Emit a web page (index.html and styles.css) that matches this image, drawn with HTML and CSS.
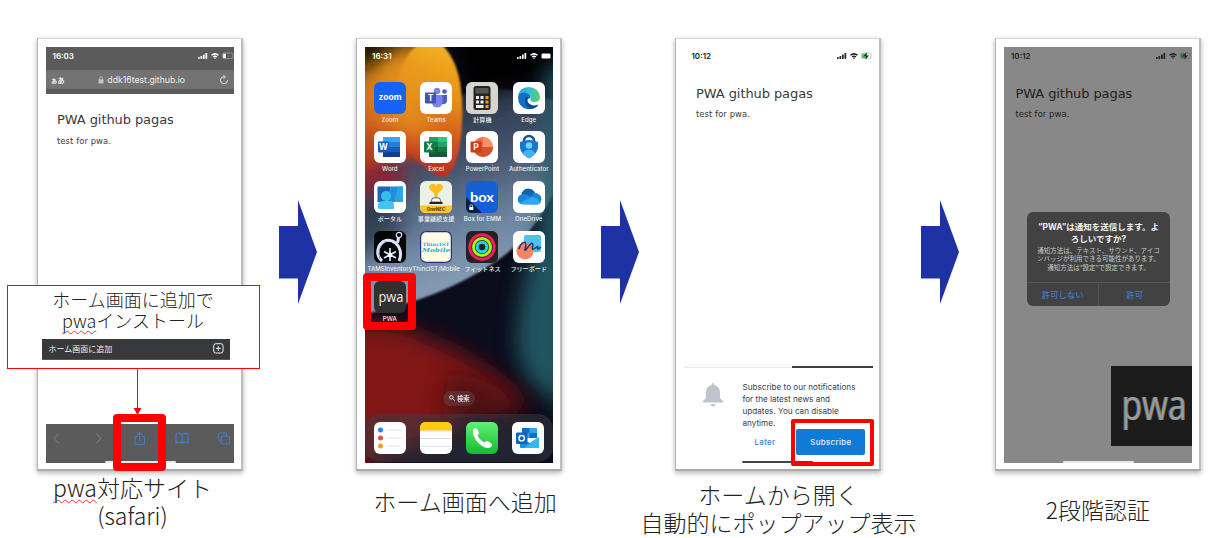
FILE: index.html
```html
<!DOCTYPE html>
<html lang="ja">
<head>
<meta charset="utf-8">
<title>PWA</title>
<link rel="stylesheet" href="styles.css">
</head>
<body>
<svg width="0" height="0" class="defs">
  <defs>
    <g id="signal"><rect x="0" y="5" width="1.7" height="2" rx=".4"/><rect x="2.5" y="3.9" width="1.7" height="3.1" rx=".4"/><rect x="5" y="2.4" width="1.7" height="4.6" rx=".4"/><rect x="7.5" y="1" width="1.7" height="6" rx=".4"/></g>
    <g id="wifi"><path d="M13 2.7Q17 -.5 21 2.7L20 3.8Q17 1.5 14 3.8Z"/><path d="M14.6 4.4Q17 2.6 19.4 4.4L18.4 5.4Q17 4.4 15.6 5.4Z"/><path d="M16 5.9Q17 5.2 18 5.9L17 7Z"/></g>
  </defs>
</svg>
<main class="steps">

  <section class="step">
    <div class="phone">
      <div class="screen safari">
        <header class="browser">
          <div class="status"><span>16:03</span>
            <svg width="36" height="8" fill="#fff"><use href="#signal"/><use href="#wifi"/><rect x="24.5" y="1" width="10.5" height="5.6" rx="1.6" fill="none" stroke="#aaa" stroke-width=".7"/><rect x="25.2" y="1.7" width="2.6" height="4.3" rx=".6"/></svg>
          </div>
          <div class="url"><span class="aa">ぁあ</span>
            <span class="host"><svg width="6" height="8" fill="#c4c4c4"><rect x=".5" y="3.3" width="5" height="4.3" rx=".7"/><path d="M1.6 3.5V2.2a1.4 1.4 0 0 1 2.8 0V3.5" fill="none" stroke="#c4c4c4" stroke-width=".8"/></svg>ddk16test.github.io</span>
            <svg width="10" height="10" fill="none" stroke="#e5e5e5" stroke-width="1"><path d="M5 1.7A3.5 3.5 0 1 0 8.5 5.2M4.4 .2L6.4 1.8L4.6 3.5"/></svg>
          </div>
        </header>
        <div class="page"><h1>PWA github pagas</h1><p>test for pwa.</p></div>
        <footer class="toolbar">
          <svg width="188" height="38" fill="none" stroke="#447dc9" stroke-width="1.1">
            <path d="M12.5 10L8 14.5L12.5 19M50.5 10L55 14.5L50.5 19" stroke="#747474"/>
            <path d="M91.700 12.5H89.900Q88.900 12.5 88.900 13.5V19.2Q88.900 20.2 89.900 20.2H97.500Q98.500 20.2 98.500 19.2V13.5Q98.500 12.5 97.500 12.5H95.700M93.700 17V8.6M91.300 10.8L93.700 8.4L96.100 10.8"/>
            <path d="M136 11Q132.5 7.7 130 10.2V19Q133.5 17 136 19.4Q138.500 17 142 19V10.200Q139.500 7.700 136 11V19.400"/>
            <rect x="172.2" y="9" width="8.3" height="8" rx="1.6"/><rect x="175.2" y="12" width="8.300" height="8" rx="1.600" fill="#5b5b5b"/>
          </svg>
          <i class="home-bar"></i>
        </footer>
      </div>
    </div>
    <p class="caption"><span class="typo">pwa</span>対応サイト<br><span class="latin">(safari)</span></p>
    <div class="mark mark-share"></div>
    <div class="callout">
      <p>ホーム画面に追加で<br><span class="typo">pwa</span>インストール</p>
      <div class="menu-row"><span>ホーム画面に追加</span><svg width="11" height="11" fill="none" stroke="#eee"><rect x=".7" y=".7" width="9.300" height="9.300" rx="2"/><path d="M5.350 3V7.700M3 5.350H7.700"/></svg></div>
      <svg class="pointer" width="10" height="47"><path d="M5.500 0V40" stroke="red"/><path d="M1.500 39H9.500L5.500 46Z" fill="red"/></svg>
    </div>
  </section>

  <svg class="arrow first" width="38" height="104"><path d="M0 26H19V0L38 52L19 104V78.500H0Z" fill="#1e32a4"/></svg>

  <section class="step">
    <div class="phone">
      <div class="screen springboard">
        <svg class="wallpaper" viewBox="0 0 565 1246" preserveAspectRatio="none">
          <defs>
            <linearGradient id="sun" x1="0.600" y1="0" x2="0.500" y2="1"><stop offset="0" stop-color="#f3b324"/><stop offset=".42" stop-color="#e68e18"/><stop offset=".72" stop-color="#cf5420"/><stop offset="1" stop-color="#bd2625"/></linearGradient>
            <linearGradient id="disk" gradientUnits="userSpaceOnUse" x1="260" y1="170" x2="400" y2="660"><stop offset="0" stop-color="#2b364a"/><stop offset=".35" stop-color="#45546c"/><stop offset=".75" stop-color="#6e86a2"/><stop offset="1" stop-color="#8398b1"/></linearGradient>
            <linearGradient id="rust" x1="0" y1="0" x2="0" y2="1"><stop offset="0" stop-color="#4a2e0c"/><stop offset=".2" stop-color="#d08415"/><stop offset=".55" stop-color="#d36419"/><stop offset="1" stop-color="#a8262a"/></linearGradient>
            <filter id="b8" x="-20%" y="-20%" width="140%" height="140%"><feGaussianBlur stdDeviation="12"/></filter>
            <filter id="b30" x="-50%" y="-50%" width="200%" height="200%"><feGaussianBlur stdDeviation="32"/></filter>
            <filter id="b2"><feGaussianBlur stdDeviation="2.500"/></filter>
          </defs>
          <rect width="565" height="1246" fill="#0b0c1c"/>
          <path d="M-20 805Q220 760 390 645Q500 570 565 440V160Q440 115 330 125L-20 300Z" fill="url(#disk)" filter="url(#b2)"/>
          <path d="M-60 420L60 420L130 540L-60 660Z" fill="#2c3446" opacity=".8" filter="url(#b30)"/>
          <path d="M-40 340H110Q160 400 60 440L-40 450Z" fill="#8f2430" filter="url(#b30)"/>
          <path d="M260 -40H600V90Q440 110 300 150Z" fill="#020304" filter="url(#b30)"/>
          <path d="M-40 -20L160 -40L210 360Q110 300 -40 400Z" fill="url(#rust)" filter="url(#b8)"/>
          <path d="M-40 -40H120Q50 50 -40 90Z" fill="#090806" filter="url(#b30)"/>
          <path d="M110 60Q150 -30 215 -20Q270 20 286 110Q300 210 282 310Q262 393 228 390Q180 370 140 320Q60 230 110 60Z" fill="url(#sun)" filter="url(#b2)"/>
          <path d="M30 80Q100 20 150 0L200 280Q120 270 30 210Z" fill="#e6941a" opacity=".75" filter="url(#b30)"/>
          <path d="M610 20L535 80Q560 300 515 580Q445 770 460 930Q500 1040 610 1080Z" fill="#245d68" opacity=".92" filter="url(#b30)"/>
          <path d="M-70 850Q60 800 200 880Q340 930 490 1070Q380 1110 330 1090Q240 1170 170 1180L-70 1290Z" fill="#811514" filter="url(#b30)"/>
          <path d="M250 980Q360 980 480 1080L230 1120Z" fill="#3c090b" opacity=".7" filter="url(#b30)"/>
        </svg>
        <div class="status"><span>16:31</span>
          <svg width="36" height="8" fill="#fff"><use href="#signal"/><use href="#wifi"/><rect x="24.500" y="1.500" width="9" height="5" rx="1.200"/></svg>
        </div>
        <div class="apps">
          <div class="app"><svg viewBox="0 0 32 32"><rect width="32" height="32" rx="6" fill="#1463f6"/><text x="16" y="18.200" class="t-zoom" textLength="23" lengthAdjust="spacingAndGlyphs">zoom</text></svg><b>Zoom</b></div>
          <div class="app"><svg viewBox="0 0 32 32"><rect width="32" height="32" rx="6" fill="#fff"/><circle cx="24.500" cy="9.500" r="2.300" fill="#5059c9"/><path d="M20 13H27V19Q26 23 21 22Z" fill="#5059c9"/><circle cx="17" cy="9" r="3.200" fill="#7b83eb"/><path d="M12 13H22.500V20Q22 25.500 17 25.500Q13 25.500 12 21Z" fill="#7b83eb"/><rect x="5" y="10.500" width="11" height="11" rx="1" fill="#464eb8"/><text x="10.500" y="19" class="t-ms">T</text></svg><b>Teams</b></div>
          <div class="app"><svg viewBox="0 0 32 32"><rect width="32" height="32" rx="6" fill="#d5d4cf"/><rect x="7.500" y="4" width="17" height="24" rx="2.500" fill="#242424"/><rect x="9.500" y="6" width="13" height="5.500" rx="1" fill="#555"/><path d="M10 14h3v3h-3zM14.500 14h3v3h-3zM10 18.500h3v3h-3zM14.500 18.500h3v3h-3zM10 23h7.500v3h-7.500z" fill="#eee"/><path d="M19.500 14h3v3h-3zM19.500 18.500h3v3h-3zM19.500 23h3v3h-3z" fill="#f79a1b"/></svg><b>計算機</b></div>
          <div class="app"><svg viewBox="0 0 32 32"><defs><linearGradient id="eg"><stop offset="0" stop-color="#249be0"/><stop offset=".55" stop-color="#32c1d0"/><stop offset="1" stop-color="#5bd457"/></linearGradient></defs><rect width="32" height="32" rx="6" fill="#fff"/><path d="M5 15Q6 5 16 5Q26 6 27 15Q27 20 21.500 20Q16.500 20 17.500 17Q19 13 15 12Q9 11 5 15Z" fill="url(#eg)"/><path d="M5 15Q7 10 13 11Q18 12 17.500 16Q12 17 15 22Q18 26 25 23Q21 28 14 27Q5 25 5 15Z" fill="#156fc5"/><path d="M12.500 15Q10 22 16 26.500Q22 28 25.500 22.500Q20 25 16 21.500Q13.500 19 15 15.500Z" fill="#0c4c94"/></svg><b>Edge</b></div>

          <div class="app"><svg viewBox="0 0 32 32"><rect width="32" height="32" rx="6" fill="#fff"/><path d="M9 6H26V11H9Z" fill="#41a5ee"/><path d="M9 11H26V16H9Z" fill="#2b7cd3"/><path d="M9 16H26V21H9Z" fill="#185abd"/><path d="M9 21H26V26H9Z" fill="#103f91"/><rect x="4" y="10.500" width="11" height="11" rx="1" fill="#185abd"/><text x="9.500" y="19" class="t-ms">W</text></svg><b>Word</b></div>
          <div class="app"><svg viewBox="0 0 32 32"><rect width="32" height="32" rx="6" fill="#fff"/><path d="M9 6H18V11H9Z" fill="#21a366"/><path d="M18 6H27V11H18Z" fill="#33c481"/><path d="M9 11H18V16H9Z" fill="#107c41"/><path d="M18 11H27V16H18Z" fill="#21a366"/><path d="M9 16H18V26H9Z" fill="#185c37"/><path d="M18 16H27V21H18Z" fill="#107c41"/><path d="M18 21H27V26H18Z" fill="#185c37"/><rect x="4" y="10.500" width="11" height="11" rx="1" fill="#107c41"/><text x="9.500" y="19" class="t-ms">X</text></svg><b>Excel</b></div>
          <div class="app"><svg viewBox="0 0 32 32"><rect width="32" height="32" rx="6" fill="#fff"/><circle cx="17" cy="16" r="10" fill="#ed6c47"/><path d="M17 6A10 10 0 0 1 27 16H17Z" fill="#ff8f6b"/><path d="M7 16A10 10 0 0 0 27 16Z" fill="#d35230"/><rect x="4.500" y="10.500" width="11" height="11" rx="1" fill="#c43e1c"/><text x="10" y="19" class="t-ms">P</text></svg><b>PowerPoint</b></div>
          <div class="app"><svg viewBox="0 0 32 32"><rect width="32" height="32" rx="6" fill="#fff"/><path d="M11 11V9.500A5 4.500 0 0 1 21 9.500V11" fill="none" stroke="#174f9e" stroke-width="2.500"/><path d="M7 11Q16 7 25 11V17Q24 23 16 27.500Q8 23 7 17Z" fill="#1a75cf"/><circle cx="16" cy="14.500" r="3.300" fill="#6ed3f5"/><path d="M10 22.500Q11 18.700 16 18.700Q21 18.700 22 22.500Q19 26 16 27.500Q13 26 10 22.500Z" fill="#43b5ee"/></svg><b>Authenticator</b></div>

          <div class="app"><svg viewBox="0 0 32 32"><rect width="32" height="32" rx="6" fill="#fff"/><path d="M3.500 5.500H17L13 21H3.500Z" fill="#1c67b7"/><path d="M17 5.500H29V21H13Z" fill="#1e8fdb"/><path d="M24 5.500H29V21H20Z" fill="#2ca6e6"/><circle cx="12" cy="15" r="5" fill="#3bbdea"/><path d="M4 27V23Q5 20 9 20H16Q20 20 20 24V28H6Q4 28 4 27Z" fill="#42c5ee"/></svg><b>ポータル</b></div>
          <div class="app"><svg viewBox="0 0 32 32"><rect width="32" height="32" rx="6" fill="#ebf1e5"/><path d="M0 24.500H32V26Q32 32 26 32H6Q0 32 0 26Z" fill="#ffc42e"/><path d="M16 14L9.500 8A3.400 3.400 0 0 1 16 5A3.400 3.400 0 0 1 22.500 8Z" fill="#f9bd20"/><path d="M14 13H18L17 17H15Z" fill="#f9bd20"/><path d="M12.500 17H19.500L21 21H11Z" fill="#fff" stroke="#333" stroke-width=".7"/><rect x="9.500" y="21" width="13" height="2" fill="#222"/><text x="16" y="29.800" class="t-nec">OneNEC</text></svg><b>事業継続支援</b></div>
          <div class="app"><svg viewBox="0 0 32 32"><rect width="32" height="32" rx="6" fill="#155fd4"/><path d="M0 16L16 32H6Q0 32 0 26Z" fill="#071f4d"/><rect x="3.300" y="26" width="4" height="3" fill="#fff"/><path d="M4 26V25A1.300 1.300 0 0 1 6.600 25V26" fill="none" stroke="#fff" stroke-width=".7"/><text x="16" y="20.500" class="t-box" textLength="24" lengthAdjust="spacingAndGlyphs">box</text></svg><b>Box for EMM</b></div>
          <div class="app"><svg viewBox="0 0 32 32"><rect width="32" height="32" rx="6" fill="#fff"/><path d="M8 23A5 5 0 0 1 8.500 13.500Q10 7.500 15.500 7.800Q20 8 22 12Q28 12.500 28.500 18Q28 23 24 23.500Z" fill="#1687d9"/><path d="M8.500 13.500Q10 7.500 15.500 7.800Q20 8 22 12Q19 12 18 16Q13 12 8.500 13.500Z" fill="#1262ad"/><path d="M7 22L18 16Q24 16 27.500 21Q26 23.500 24 23.500H9Z" fill="#2ba8ee"/></svg><b>OneDrive</b></div>

          <div class="app"><svg viewBox="0 0 32 32"><rect width="32" height="32" rx="6" fill="#050607"/><g fill="none" stroke="#dfe5ff"><path d="M8 30A12 12 0 0 1 12 9.500Q22 8 26 19Q27.500 25 25 30" stroke-width="3"/><path d="M6 28Q2 17 12 10" stroke-width="1" stroke="#8d9be0"/><circle cx="25" cy="4" r="2.700" stroke-width="1.200"/><path d="M24.500 7L23.500 12" stroke-width="3"/><path d="M16 17V30M10 20.500L22 27M10 27L22 20.500" stroke-width="1.700"/></g><circle cx="16" cy="24" r="2.300" fill="#fff"/></svg><b>TAMSInventory</b></div>
          <div class="app"><svg viewBox="0 0 32 32"><rect x=".6" y=".6" width="30.800" height="30.800" rx="5.500" fill="#fffbe5" stroke="#26307f" stroke-width="1.200"/><text x="16" y="15" class="t-thin" textLength="27" lengthAdjust="spacingAndGlyphs">ThincIST</text><text x="16" y="20.500" class="t-mobile" textLength="28" lengthAdjust="spacingAndGlyphs">Mobile</text></svg><b>ThincIST/Mobile</b></div>
          <div class="app"><svg viewBox="0 0 32 32"><rect width="32" height="32" rx="6" fill="#222"/><g fill="none" stroke-width="3"><circle cx="16" cy="16" r="12.200" stroke="#f51b61"/><circle cx="16" cy="16" r="8.500" stroke="#a6f514"/><circle cx="16" cy="16" r="4.800" stroke="#1ed7e8"/></g></svg><b>フィットネス</b></div>
          <div class="app"><svg viewBox="0 0 32 32"><rect width="32" height="32" rx="6" fill="#fff"/><rect x="11" y="4" width="17" height="17" rx="2" fill="#4dc3eb"/><circle cx="12" cy="20" r="8.500" fill="#f58465"/><path d="M6 18C9 9 15 9 12 18C11 24 19 7 20 14C17 24 25 13 25 16Q23 20 28 16" fill="none" stroke="#183b70" stroke-width="1.500"/></svg><b>フリーボード</b></div>

          <div class="app"><svg viewBox="0 0 32 32"><rect width="32" height="32" rx="6" fill="#303030"/><text x="17" y="21" class="t-pwa" textLength="25" lengthAdjust="spacingAndGlyphs">pwa</text></svg><b>PWA</b></div>
        </div>
        <div class="search"><svg width="6" height="6" fill="none" stroke="#fff" stroke-width=".8"><circle cx="2.300" cy="2.300" r="1.800"/><path d="M3.700 3.700L5.600 5.600"/></svg>検索</div>
        <div class="dock">
          <svg viewBox="0 0 32 32"><rect width="32" height="32" rx="6" fill="#fff"/><path d="M12 8H28M12 16H28M12 24H28" stroke="#ddd" stroke-width=".7"/><circle cx="6.500" cy="8" r="2.500" fill="#2385f5"/><circle cx="6.500" cy="16" r="2.500" fill="#f3473d"/><circle cx="6.500" cy="24" r="2.500" fill="#f89d24"/></svg>
          <svg viewBox="0 0 32 32"><rect width="32" height="32" rx="6" fill="#fff"/><path d="M0 8.500V6Q0 0 6 0H26Q32 0 32 6V8.500Z" fill="#fbca14"/><path d="M0 9H32M0 16.500H32M0 24.300H32" stroke="#c9c9c9" stroke-width=".6"/></svg>
          <svg viewBox="0 0 32 32"><defs><linearGradient id="pg" x2="0" y2="1"><stop stop-color="#61f076"/><stop offset="1" stop-color="#13bd2e"/></linearGradient></defs><rect width="32" height="32" rx="6" fill="url(#pg)"/><path d="M7 8Q8 5.500 10 6Q11.500 6.500 13 10.500Q13 12 11.500 13Q13 18 18.500 20.500Q20 18.500 21.500 19L25.500 21.500Q27 23 25 25Q21 28 14 22.500Q6 15.500 7 8Z" fill="#fff"/></svg>
          <svg viewBox="0 0 32 32"><rect width="32" height="32" rx="6" fill="#fff"/><path d="M10 6H25V16H10Z" fill="#28a8ea"/><path d="M10 6H17.500V11H10ZM17.500 11H25V16H17.500Z" fill="#0f6fc5"/><path d="M8 16L18 21L27 15V26H9Q8 26 8 25Z" fill="#1491df"/><path d="M27 15L12 26H27Z" fill="#35b8f1"/><rect x="4" y="10.500" width="11.500" height="11.500" rx="1" fill="#0f66bd"/><circle cx="9.700" cy="16.200" r="2.700" fill="none" stroke="#fff" stroke-width="1.400"/></svg>
        </div>
      </div>
    </div>
    <p class="caption single-a">ホーム画面へ追加</p>
    <div class="mark mark-app"></div>
  </section>

  <svg class="arrow" width="38" height="104"><path d="M0 26H19V0L38 52L19 104V78.500H0Z" fill="#1e32a4"/></svg>

  <section class="step">
    <div class="phone">
      <div class="screen popup">
        <div class="status"><span>10:12</span>
          <svg width="36" height="8" fill="#222"><use href="#signal"/><use href="#wifi"/><rect x="24.500" y="1" width="9.500" height="5.600" rx="1.600" fill="#fff" stroke="#aaa" stroke-width=".7"/><rect x="25" y="1.500" width="4.500" height="4.600" rx="1" fill="#35d35a"/><path d="M30 .5L26.500 4.200H29L28.500 7.500L32 3.500H29.500Z"/></svg>
        </div>
        <div class="page"><h1>PWA github pagas</h1><p>test for pwa.</p></div>
        <div class="prompt">
          <i class="strip"></i>
          <svg class="bell" width="20" height="24" viewBox="0 0 20 24" fill="#bdc4cb"><path d="M10 0Q11.300 0 11.300 2Q17 3 17 10V15L20 18V19.500H0V18L3 15V10Q3 3 8.700 2Q8.700 0 10 0ZM7.500 21H12.500Q12 23.500 10 23.500Q8 23.500 7.500 21Z"/></svg>
          <div class="message">Subscribe to our notifications<br>for the latest news and<br>updates. You can disable<br>anytime.</div>
          <div class="actions"><span>Later</span><span class="button">Subscribe</span></div>
          <i class="home-bar dark"></i>
        </div>
      </div>
    </div>
    <p class="caption double-b">ホームから開く<br>自動的にポップアップ表示</p>
    <div class="mark mark-subscribe"></div>
  </section>

  <svg class="arrow last" width="38" height="104"><path d="M0 26H19V0L38 52L19 104V78.500H0Z" fill="#1e32a4"/></svg>

  <section class="step">
    <div class="phone">
      <div class="screen dimmed">
        <div class="status"><span>10:12</span>
          <svg width="36" height="8" fill="#222"><use href="#signal"/><use href="#wifi"/><rect x="24.500" y="1" width="9.500" height="5.600" rx="1.600" fill="none" stroke="#666" stroke-width=".7"/><rect x="25" y="1.500" width="4.500" height="4.600" rx="1" fill="#277a3a"/><path d="M30 .5L26.500 4.200H29L28.500 7.500L32 3.500H29.500Z"/></svg>
        </div>
        <div class="page"><h1>PWA github pagas</h1><p>test for pwa.</p></div>
        <div class="dialog">
          <h2>“PWA”は通知を送信します。よ<br>ろしいですか?</h2>
          <p>通知方法は、テキスト、サウンド、アイコ<br>ンバッジが利用できる可能性があります。<br>通知方法は“設定”で設定できます。</p>
          <div class="choices"><span>許可しない</span><span>許可</span></div>
        </div>
        <div class="tile"><svg width="81" height="80"><text x="43" y="54" class="t-tile" textLength="65" lengthAdjust="spacingAndGlyphs">pwa</text></svg></div>
        <i class="home-bar"></i>
      </div>
    </div>
    <p class="caption single-c">2段階認証</p>
  </section>
</main>
</body>
</html>
```
FILE: styles.css
```css
* { box-sizing: border-box; }
body { margin: 0; background: #fff; font-family: "Liberation Sans", "Noto Sans CJK JP", sans-serif; overflow: hidden; }
.defs { position: absolute; }
.steps { display: flex; align-items: flex-start; width: 1228px; height: 538px; padding: 37.5px 0 0 36.5px; }
.step { position: relative; flex: none; width: 206px; }
.phone { display: flex; width: 206px; height: 433.5px; padding: 8.500px 7.800px 7px 8px; background: #fff; border: 1px solid #b4b4b4; border-top-color: #d6d6d6; border-right: 2px solid #bdbdbd; border-bottom: 2px solid #aaa; box-shadow: 0 2px 5px rgba(0,0,0,.3); }
.screen { flex: none; display: flex; flex-direction: column; width: 188.400px; height: 415.500px; overflow: hidden; position: relative; }
.arrow { flex: none; margin: 162.500px 36.600px 0 38.900px; }
.arrow.first { margin-left: 36.500px; margin-right: 39px; }
.arrow.last { margin-left: 39.900px; margin-right: 35.600px; }

.status { display: flex; justify-content: space-between; align-items: center; height: 17px; padding-left: 7px; font: 600 8.200px "Liberation Sans", sans-serif; color: #fff; position: relative; }
.status span { font: 600 8px Inter, sans-serif; }
.page { padding: 17px 0 0 11.500px; color: #3a3a3a; font-family: "DejaVu Sans", sans-serif; }
.page h1 { margin: 0; font-size: 13px; line-height: 17px; font-weight: 400; letter-spacing: -.08px; white-space: nowrap; }
.page p { margin: 6.500px 0 0; font-size: 8.400px; line-height: 12px; letter-spacing: .08px; }

.browser { height: 47px; background: #5b5b5b; }
.url { display: flex; align-items: center; justify-content: space-between; height: 19px; margin-top: 6px; padding: 0 5px; background: #737373; border-radius: 3px; color: #eee; font: 8.700px Inter, sans-serif; }
.aa { font: 700 7px "Noto Sans CJK JP", sans-serif; }
.host { display: flex; gap: 3px; align-items: center; }
.toolbar { margin-top: auto; height: 38.500px; background: #5b5b5b; position: relative; }
.home-bar { position: absolute; left: 59px; bottom: 0; width: 71px; height: 1.500px; background: #e8e8e8; border-radius: 2px; }
.home-bar.dark { background: #444; height: 2px; left: 58px; }

.caption { margin: 3px -60px 0; text-align: center; color: #222; font: 300 23px/27.500px "Noto Sans CJK JP", sans-serif; white-space: nowrap; }
.step:first-child .caption { transform: translateX(-7px); }
.caption.single-a { margin-top: 16.500px; transform: translateX(6px); }
.caption.double-b { margin-top: 10px; }
.caption.single-c { margin-top: 24.500px; }
.typo { text-decoration: underline wavy #f33 .7px; text-underline-offset: 2px; text-decoration-skip-ink: none; }

.mark { position: absolute; border: 8px solid red; border-radius: 4px; }
.mark-share { left: 76.500px; top: 376.500px; width: 53px; height: 57px; }
.mark-app { left: 7px; top: 235.500px; width: 53px; height: 57px; }
.mark-subscribe { left: 116px; top: 381.500px; width: 83px; height: 47px; border-width: 4px; border-radius: 2px; }

.callout { position: absolute; left: -29.500px; top: 247.500px; width: 253px; height: 84px; border: 1px solid red; background: #fff; display: flex; flex-direction: column; align-items: center; padding-top: 2.500px; }
.callout p { margin: 0 0 0 -1px; text-align: center; font: 300 18px/21.500px "Noto Sans CJK JP", sans-serif; color: #222; }
.menu-row { display: flex; justify-content: space-between; align-items: center; width: 188px; height: 21px; margin: 7.500px 0 0 4px; padding: 0 6px 1px 7px; background: #38393c; border-bottom: 1px solid #a33; color: #eee; font: 8px "Noto Sans CJK JP", sans-serif; }
.pointer { position: absolute; left: 124px; top: 83px; }

.wallpaper { position: absolute; inset: 0; width: 100%; height: 100%; }
.springboard { background: #0b0c1c; }
.apps { position: relative; display: grid; grid-template-columns: repeat(4, 46.300px); grid-auto-rows: 49.900px; margin: 17.500px 0 0 1.700px; }
.app { display: flex; flex-direction: column; align-items: center; }
.app svg { width: 32px; height: 32px; flex: none; }
.app b { font: 500 6.100px/8px Inter, "Noto Sans CJK JP", sans-serif; color: #eee; white-space: nowrap; margin-top: 2px; }
.search { position: relative; display: flex; align-items: center; justify-content: center; gap: 2px; width: 32px; height: 15px; margin: 60px auto 0; border-radius: 8px; background: rgba(110,90,95,.35); color: #eee; font: 500 6.300px "Noto Sans CJK JP", sans-serif; }
.dock { position: relative; display: flex; justify-content: space-between; width: 188px; height: 48px; margin-top: auto; margin-bottom: 1px; padding: 8px 9px; border-radius: 15px; background: rgba(60,60,70,.5); }
.dock svg { width: 32px; height: 32px; }
.t-zoom, .t-ms, .t-nec, .t-box, .t-thin, .t-mobile, .t-pwa, .t-tile { text-anchor: middle; fill: #fff; font-family: Inter, sans-serif; font-weight: 700; }
.t-zoom { font-size: 8px; }
.t-ms { font-size: 8.500px; }
.t-nec { font-size: 4.500px; fill: #443000; }
.t-box { font-size: 13px; font-family: Lato, sans-serif; }
.t-thin, .t-mobile { fill: #28add5; font: 700 4.500px "DejaVu Serif", serif; }
.t-mobile { font-style: italic; font-size: 5.500px; }
.t-pwa { font: 400 15px "Open Sans", sans-serif; fill: #f4f0e8; }
.t-tile { font: 400 42px "Open Sans", sans-serif; fill: #9b9b9b; text-shadow: -1px 0 #35699c, 1px 0 #8a602e; }

.popup .status, .dimmed .status { color: #222; }
.popup .page, .dimmed .page { padding-top: 20.500px; }
.prompt { position: relative; margin-top: auto; height: 96px; display: grid; grid-template-columns: 58px 1fr; grid-template-rows: 61px 26px; padding-top: 0; background: #fff; border-top: 1px solid #eee; box-shadow: 0 -2px 5px rgba(0,0,0,.05); }
.strip { position: absolute; right: 0; top: -2px; width: 81px; height: 2.500px; background: #3d3d3f; }
.bell { margin: 15px 0 0 18.500px; }
.message { padding-top: 13px; color: #344250; font: 400 8.150px/12px Inter, sans-serif; white-space: nowrap; }
.actions { grid-column: 2; display: flex; align-items: center; justify-content: space-between; padding: 0 7.500px 0 12px; color: #3188cf; font: 500 7.900px Inter, sans-serif; letter-spacing: .35px; margin-top: 1px; }
.button { display: flex; align-items: center; justify-content: center; width: 69px; height: 26px; border-radius: 2px; background: #0f7bd8; color: #e6f2ff; }

.dimmed { background: #888; }
.dimmed .page { color: #222; }
.dialog { display: flex; flex-direction: column; width: 143px; height: 94px; margin: 92px 0 0 23px; padding-top: 10px; border-radius: 6px; background: #424242; text-align: center; color: #f0f0f0; white-space: nowrap; overflow: hidden; }
.dialog h2 { margin: 0; font: 700 8.500px/11.500px Inter, "Noto Sans CJK JP", sans-serif; }
.dialog p { margin: 1.500px 0 0; font: 400 6.500px/8.500px Inter, "Noto Sans CJK JP", sans-serif; color: #c8c8c8; }
.choices { display: grid; grid-template-columns: 1fr 1fr; margin-top: auto; height: 24px; border-top: 1px solid #545454; color: #3d7ccc; font: 500 8.400px/23px "Noto Sans CJK JP", sans-serif; }
.choices span + span { border-left: 1px solid #545454; }
.tile { align-self: flex-end; margin-top: auto; margin-bottom: 16.500px; width: 81.400px; height: 80px; background: #1c1c1c; }
```
